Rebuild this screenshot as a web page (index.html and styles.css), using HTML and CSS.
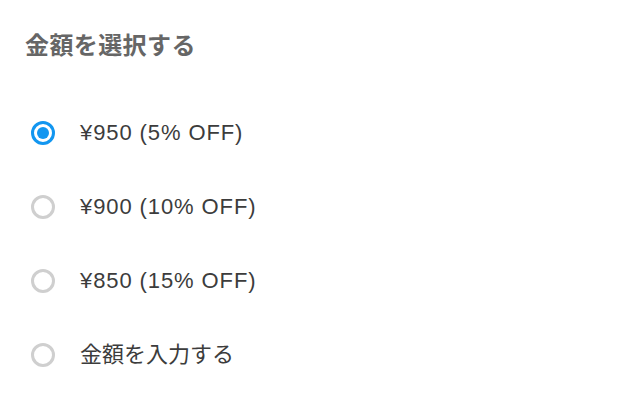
FILE: index.html
```html
<!DOCTYPE html>
<html lang="ja">
<head>
    <meta charset="UTF-8">
    <meta name="viewport" content="width=device-width, initial-scale=1.0">
    <title>金額を選択する</title>
    <link rel="stylesheet" href="styles.css">
</head>
<body>
    <div class="container">
        <h2 class="section-title">金額を選択する</h2>

        <div class="amount-list">
            <label class="amount-option">
                <input type="radio" name="amount" value="950" checked>
                <span class="radio-mark"></span>
                <span class="amount-label price">¥950 (5% OFF)</span>
            </label>
            <label class="amount-option">
                <input type="radio" name="amount" value="900">
                <span class="radio-mark"></span>
                <span class="amount-label price">¥900 (10% OFF)</span>
            </label>
            <label class="amount-option">
                <input type="radio" name="amount" value="850">
                <span class="radio-mark"></span>
                <span class="amount-label price">¥850 (15% OFF)</span>
            </label>
            <label class="amount-option">
                <input type="radio" name="amount" value="custom">
                <span class="radio-mark"></span>
                <span class="amount-label">金額を入力する</span>
            </label>
        </div>
    </div>
</body>
</html>
```

FILE: styles.css
```css
* {
    margin: 0;
    padding: 0;
    box-sizing: border-box;
}

body {
    font-family: "Liberation Sans", "Noto Sans CJK JP", sans-serif;
    background: #fff;
    color: #333;
}

.container {
    padding: 30px 25px 0;
}

.section-title {
    font-size: 24px;
    line-height: 32px;
    font-weight: 700;
    letter-spacing: 0.4px;
    color: #666;
}

.amount-list {
    margin-top: 34px;
    display: flex;
    flex-direction: column;
}

.amount-option {
    display: flex;
    align-items: center;
    height: 74px;
    padding-left: 6px;
    gap: 25px;
    cursor: pointer;
}

.amount-option input {
    display: none;
}

.radio-mark {
    width: 24px;
    height: 24px;
    border-radius: 50%;
    border: 3px solid #cfcfcf;
    display: flex;
    align-items: center;
    justify-content: center;
    flex-shrink: 0;
}

.amount-option input:checked + .radio-mark {
    border-color: #1296f0;
}

.amount-option input:checked + .radio-mark::after {
    content: "";
    width: 12px;
    height: 12px;
    border-radius: 50%;
    background: #1296f0;
}

.amount-label {
    font-size: 22px;
    line-height: 30px;
    color: #3c3c3c;
}

.amount-label.price {
    letter-spacing: 0.9px;
}
```
